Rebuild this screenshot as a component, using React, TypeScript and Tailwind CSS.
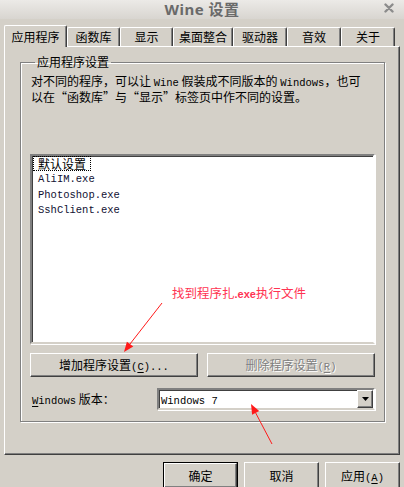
import type { ReactNode } from 'react';

const cjk = "font-['Noto_Sans_CJK_SC',sans-serif]";

function L({ children }: { children: ReactNode }) {
  return <span className="font-['Liberation_Mono',monospace] text-[10.5px] leading-none">{children}</span>;
}

const raised =
  'border border-t-white border-l-white border-r-[#404040] border-b-[#404040] shadow-[inset_-1px_-1px_0_#808080]';
const sunken =
  'border-2 border-t-[#808080] border-l-[#808080] border-r-white border-b-[#d4d0c8] shadow-[inset_1px_1px_0_#404040,1px_1px_0_#fff]';

const tabs = [
  { label: '应用程序', w: 'w-[63px]', active: true },
  { label: '函数库', w: 'w-[53px]' },
  { label: '显示', w: 'w-[53px]' },
  { label: '桌面整合', w: 'w-[60px]' },
  { label: '驱动器', w: 'w-[54px]' },
  { label: '音效', w: 'w-[54px]' },
  { label: '关于', w: 'w-[54px]' },
];

function Tab({ label, w, active }: { label: string; w: string; active?: boolean }) {
  return (
    <div
      className={`${w} flex items-center justify-center rounded-t-[2px] border-t border-l border-r border-t-white border-l-white border-r-[#404040] bg-[#d4d0c8] shadow-[inset_-1px_0_0_#808080] ${
        active ? 'relative z-10 h-[22px] -mb-px' : 'h-[19px]'
      }`}
    >
      {label}
    </div>
  );
}

function Button({
  children,
  className = '',
  disabled,
}: {
  children: ReactNode;
  className?: string;
  disabled?: boolean;
}) {
  return (
    <div
      className={`${raised} flex items-center justify-center ${
        disabled ? 'text-[#808080] [text-shadow:1px_1px_0_#fff]' : 'text-black'
      } ${className}`}
    >
      {children}
    </div>
  );
}

export default function App() {
  return (
    <div className={`relative w-[404px] h-[487px] overflow-hidden bg-[#d4d0c8] text-[12px] text-black ${cjk}`}>
      {/* title bar */}
      <div className="relative h-[19px] bg-gradient-to-b from-[#eceae7] to-[#d8d5d0] flex items-center justify-center">
        <span className="font-['Noto_Sans','Noto_Sans_CJK_SC',sans-serif] font-bold text-[15px] tracking-[0.5px] text-[#6a6a6a] leading-none">
          Wine 设置
        </span>
        <svg className="absolute right-[10px] top-[3px]" width="10" height="10" viewBox="0 0 10 10">
          <path d="M1.5 1.5 L8.5 8.5 M8.5 1.5 L1.5 8.5" stroke="#8c8c8c" strokeWidth="2.4" strokeLinecap="round" />
        </svg>
      </div>

      {/* tabs */}
      <div className="mt-[6px] h-[21px] flex items-end pl-[4px]">
        {tabs.map((t) => (
          <Tab key={t.label} {...t} />
        ))}
      </div>

      {/* tab panel */}
      <div className="mx-[4px] h-[409px] border border-t-white border-l-white border-r-[#404040] border-b-[#404040] shadow-[inset_-1px_-1px_0_#808080]">
        <fieldset className="mt-[7px] ml-[15px] mr-[14px] border border-[#808080] shadow-[1px_1px_0_#fff,inset_1px_1px_0_#fff] px-[9px] pb-[11px]">
          <legend className="ml-[5px] px-[2px] leading-[16px]">应用程序设置</legend>
          <p className="mt-[3px] ml-[1px] leading-[16px] whitespace-nowrap">
            对不同的程序，可以让 <L>Wine</L> 假装成不同版本的 <L>Windows</L>，也可
            <br />
            以在“函数库”与“显示”标签页中作不同的设置。
          </p>

          {/* list box */}
          <div className={`mt-[49px] h-[190px] bg-white ${sunken} pl-[1px]`}>
            <div className="h-[15.5px] flex items-center">
              <span className="border border-dotted border-black px-[4px] leading-[13px]">默认设置</span>
            </div>
            {['AliIM.exe', 'Photoshop.exe', 'SshClient.exe'].map((name) => (
              <div key={name} className="h-[15.5px] flex items-center pl-[5px] text-[#111133]">
                <L>{name}</L>
              </div>
            ))}
          </div>

          {/* buttons */}
          <div className="mt-[9px] flex gap-[9px]">
            <Button className="flex-1 h-[24px]">
              <span>
                增加程序设置<L>(<u className="underline-offset-2">C</u>)...</L>
              </span>
            </Button>
            <Button className="flex-1 h-[24px]" disabled>
              <span>
                删除程序设置<L>(<u className="underline-offset-2">R</u>)</L>
              </span>
            </Button>
          </div>

          {/* windows version */}
          <div className="mt-[11px] flex items-center">
            <span className="flex-1 pl-[2px]">
              <L>
                <u className="underline-offset-2">W</u>indows
              </L>{' '}
              版本：
            </span>
            <div className={`w-[218px] h-[22px] bg-white ${sunken} flex items-center`}>
              <span className="flex-1 pl-[2px]">
                <L>Windows 7</L>
              </span>
              <div className={`w-[16px] h-[18px] bg-[#d4d0c8] ${raised} flex items-center justify-center`}>
                <svg width="7" height="4" viewBox="0 0 7 4">
                  <path d="M0 0 H7 L3.5 4 Z" fill="#000" />
                </svg>
              </div>
            </div>
          </div>
        </fieldset>
      </div>

      {/* dialog buttons */}
      <div className="mt-[7px] flex justify-end gap-[6px] pr-[4px]">
        <div className="w-[75px] h-[27px] border border-black">
          <Button className="h-full">确定</Button>
        </div>
        <Button className="w-[75px] h-[27px]">取消</Button>
        <Button className="w-[75px] h-[27px]">
          <span>
            应用<L>(<u className="underline-offset-2">A</u>)</L>
          </span>
        </Button>
      </div>

      {/* red annotations */}
      <span className="absolute left-[172px] top-[285px] text-[12.5px] leading-[16px] text-[#ff3352] whitespace-nowrap">
        找到程序扎<span className="font-['Liberation_Sans',sans-serif] font-bold text-[11px]">.exe</span>执行文件
      </span>
      <svg className="absolute inset-0 pointer-events-none" width="404" height="487" viewBox="0 0 404 487">
        <line x1="162" y1="303" x2="130" y2="344" stroke="#ff1a1a" strokeWidth="1" />
        <polygon points="124,352 133.3,346.6 126.9,341.7" fill="#ff1a1a" />
        <line x1="272" y1="444" x2="255.6" y2="412.8" stroke="#ff1a1a" strokeWidth="1" />
        <polygon points="251,404 259.2,411 252.1,414.7" fill="#ff1a1a" />
      </svg>
    </div>
  );
}
